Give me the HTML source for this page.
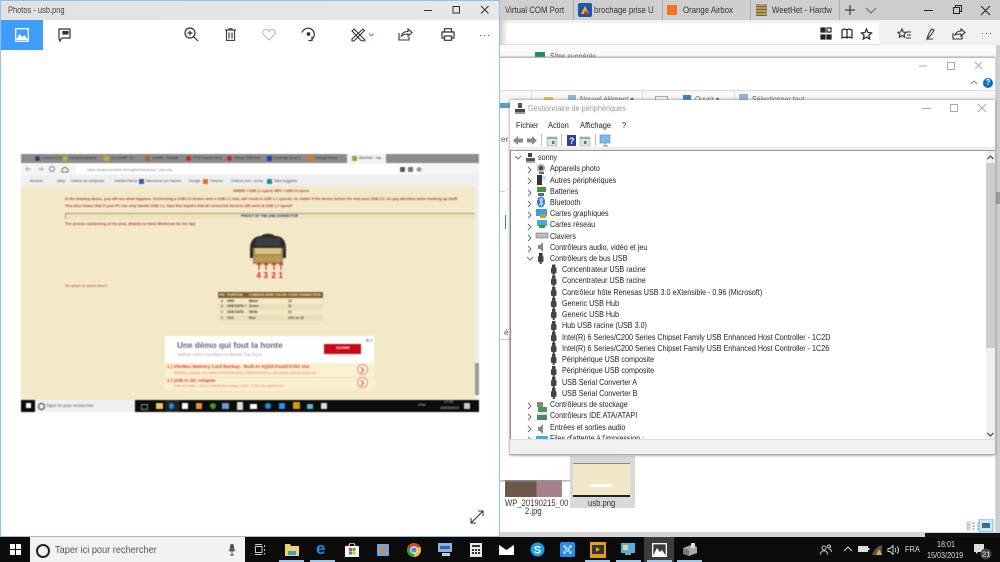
<!DOCTYPE html>
<html lang="fr"><head><meta charset="utf-8"><title>Photos - usb.png</title>
<style>
html,body{margin:0;padding:0;background:#fff}
body{width:1000px;height:562px;overflow:hidden;position:relative;font-family:"Liberation Sans",sans-serif}
#root{position:absolute;left:0;top:0;width:1000px;height:562px;overflow:hidden;filter:blur(.35px)}
.b,.t,svg{position:absolute}
.t{white-space:nowrap;line-height:1}
.s{transform:scaleX(.87);transform-origin:0 0}
.row{position:absolute;white-space:nowrap;font-size:8.6px;line-height:11px;color:#222;transform:scaleX(.835);transform-origin:0 0}
.tab{position:absolute;top:0;height:20px;background:#cfcfcf;border-right:1px solid #aaa}
#thumb .t{color:#b33a33}
#thumb .g{color:#666;font-size:3.500px;font-weight:normal}
#thumb .c{color:#333;font-size:3.300px;font-weight:bold}
</style></head><body><div id="root">

<!-- right side background -->
<div class="b" style="left:500px;top:0;width:500px;height:20px;background:#cdcdcd"></div>
<div class="b" style="left:500px;top:20px;width:500px;height:25px;background:#f0f0f0"></div>
<div class="b" style="left:500px;top:23px;width:379px;height:21px;background:#fff;border-bottom:1px solid #ddd"></div>
<div class="b" style="left:500px;top:20px;width:8px;height:520px;background:linear-gradient(90deg,#cfcfcf,rgba(255,255,255,0))"></div>
<div class="b" style="left:500px;top:45px;width:500px;height:12px;background:#fafafa"></div>
<div class="b" style="left:535px;top:52px;width:10px;height:6px;background:#1f8a70"></div>
<div class="t s" style="left:550px;top:53px;font-size:8px;color:#555">Sites suggérés</div>
<div class="b" style="left:996px;top:45px;width:4px;height:490px;background:#cfcfcf"></div>
<div class="b" style="left:996px;top:192px;width:4px;height:12px;background:#9c9c9c"></div>

<!-- browser tabs -->
<div class="tab" style="left:500px;width:73px"></div>
<div class="tab" style="left:574px;width:88px"></div>
<div class="tab" style="left:663px;width:87px"></div>
<div class="tab" style="left:751px;width:88px"></div>
<div class="t s" style="left:505px;top:6px;font-size:9px;color:#333">Virtual COM Port</div>
<svg style="left:578px;top:3px" width="14" height="14"><rect width="14" height="14" rx="2" fill="#2356a8"/><path d="M3 11 7 3l4 8z" fill="#e8c020"/><path d="M7 7l4 4H6z" fill="#d02828"/></svg>
<div class="t s" style="left:594px;top:6px;font-size:9px;color:#333;width:73px;overflow:hidden">brochage prise U</div>
<div class="b" style="left:667px;top:5px;width:10px;height:10px;background:#f47321"></div>
<div class="t s" style="left:683px;top:6px;font-size:9px;color:#333">Orange Airbox</div>
<div class="b" style="left:756px;top:4px;width:11px;height:12px;background:repeating-linear-gradient(180deg,#b39a5a 0 2px,#7c6a3c 2px 3px)"></div>
<div class="t s" style="left:772px;top:6px;font-size:9px;color:#333;width:72px;overflow:hidden">WeetHet - Hardw</div>
<svg style="left:843px;top:3px" width="36" height="14" fill="none" stroke="#222"><path d="M7 2v10M2 7h10"/><path d="M23 5l5 5 5-5" stroke="#666"/></svg>
<svg style="left:920px;top:4px" width="75" height="13" fill="none" stroke="#222"><path d="M4 6.500h9"/><rect x="33.500" y="3.500" width="6" height="6"/><path d="M35.500 3.500v-2h6v6h-2"/><path d="M61 2l9 9M70 2l-9 9"/></svg>
<!-- address bar icons -->
<svg style="left:820px;top:27px" width="54" height="14" fill="none" stroke="#222" stroke-width="1.200"><rect x="1" y="1" width="4" height="4" fill="#222"/><rect x="7" y="1" width="4" height="4"/><rect x="1" y="8" width="4" height="4" fill="#222"/><rect x="7" y="8" width="4" height="4" fill="#222"/><path d="M22 3c2-1 4-1 5 0 1-1 3-1 5 0v8c-2-1-4-1-5 0-1-1-3-1-5 0zM27 3v8"/><path d="M46.500 2l1.500 3.500 3.500.4-2.600 2.400.8 3.700-3.200-1.900-3.200 1.900.8-3.700-2.600-2.400 3.500-.4z"/></svg>
<svg style="left:897px;top:27px" width="96" height="14" fill="none" stroke="#333" stroke-width="1.100"><path d="M5 2l1.300 3 3 .3-2.200 2 .6 3-2.700-1.600-2.700 1.600.6-3-2.200-2 3-.3zM9 5h5M10 8h4M9 11h5"/><path d="M30 12c1-4 3-8 5-10l2 1c-1 3-3 5-5 7zM30 12h6"/><path d="M56 6v6h9V8M58 8c1-3 3-4 6-4V2l4 3.500-4 3.500V7c-2 0-4 0-6 1z"/></svg>
<div class="t" style="left:981px;top:29px;font-size:9px;color:#333;letter-spacing:1px">···</div>

<!-- explorer behind -->
<div class="b" style="left:500px;top:57px;width:495px;height:475px;background:#fff;box-shadow:0 0 2px #888;border-top:1px solid #bbb"></div>
<svg style="left:918px;top:60px" width="70" height="12" fill="none" stroke="#aaa"><path d="M1 6h8"/><rect x="29.500" y="2.500" width="7" height="7"/><path d="M57 2l7 7M64 2l-7 7"/></svg>
<svg style="left:970px;top:79px" width="8" height="6" fill="none" stroke="#888"><path d="M1 5l3-3 3 3"/></svg>
<div class="b" style="left:983px;top:78px;width:10px;height:10px;border-radius:50%;background:#0a6fd0;color:#fff;font:bold 8px/10px 'Liberation Sans',sans-serif;text-align:center">?</div>
<div class="b" style="left:500px;top:90px;width:495px;height:1px;background:#ddd"></div>
<div class="b" style="left:500px;top:91px;width:495px;height:14px;background:#f7f7f7"></div>
<div class="b" style="left:531px;top:91px;width:1px;height:10px;background:#ddd"></div>
<div class="b" style="left:642px;top:91px;width:1px;height:10px;background:#ddd"></div>
<div class="b" style="left:734px;top:91px;width:1px;height:10px;background:#ddd"></div>
<div class="b" style="left:544px;top:97px;width:9px;height:3px;background:#e8c45a"></div>
<div class="b" style="left:568px;top:95px;width:8px;height:5px;background:#8fb4dc"></div>
<div class="t s" style="left:580px;top:96px;font-size:8px;color:#666">Nouvel élément ▾</div>
<div class="b" style="left:655px;top:96px;width:11px;height:4px;border:1px solid #aaa"></div>
<div class="b" style="left:683px;top:95px;width:8px;height:5px;background:#3a7fd0"></div>
<div class="t s" style="left:695px;top:96px;font-size:8px;color:#666">Ouvrir ▾</div>
<div class="b" style="left:739px;top:94px;width:9px;height:6px;background:#8fb4dc"></div>
<div class="t s" style="left:752px;top:96px;font-size:8px;color:#666">Sélectionner tout</div>
<div class="b" style="left:500px;top:103px;width:10px;height:5px;background:#5b9bd5"></div>
<div class="t" style="left:501px;top:136px;font-size:8px;color:#555">er</div>
<div class="b" style="left:500px;top:191px;width:5px;height:1px;background:#ccc"></div>
<div class="b" style="left:505px;top:215px;width:1px;height:14px;background:#2a7fd0"></div>
<div class="b" style="left:500px;top:339px;width:10px;height:1px;background:#ccc"></div>
<div class="t" style="left:504px;top:329px;font-size:8px;color:#555">é</div>

<!-- file thumbnails -->
<div class="b" style="left:505px;top:480px;width:57px;height:17px;background:linear-gradient(90deg,#6b5a4a 0 55%,#a8808a 55%)"></div>
<div class="b" style="left:500px;top:456px;width:120px;height:24px;background:#fff;box-shadow:0 1px 2px #999"></div>
<div class="b" style="left:610px;top:456px;width:10px;height:24px;background:#efefef"></div>
<svg style="left:611px;top:472px" width="8" height="6" fill="none" stroke="#555"><path d="M1 1l3 3 3-3"/></svg>
<div class="t s" style="left:505px;top:499px;font-size:8.800px;color:#333">WP_20190215_00</div>
<div class="t s" style="left:525px;top:507px;font-size:8.800px;color:#333">2.jpg</div>
<div class="b" style="left:570px;top:456px;width:65px;height:52px;background:#d9d9d9"></div>
<div class="b" style="left:573px;top:463px;width:57px;height:31px;background:#f2e8c8;border-top:1px solid #888;border-bottom:2px solid #222"></div>
<div class="b" style="left:590px;top:484px;width:22px;height:3px;background:#fff"></div>
<div class="t s" style="left:588px;top:499px;font-size:8.800px;color:#333">usb.png</div>
<!-- explorer bottom -->
<svg style="left:965px;top:519px" width="30" height="14" fill="none"><path d="M2 3h3v2H2zM2 6h3v2H2zM2 9h3v2H2z" stroke="#d0a0a0" stroke-width=".7"/><path d="M7 4h3M7 7h3M7 10h3M12 4h3M12 7h3M12 10h3" stroke="#999"/><rect x="14" y="0" width="14" height="13" fill="#cfe6f5" stroke="#7ab8e0"/><rect x="17" y="4" width="8" height="5" fill="#3b6d8f"/></svg>
<div class="b" style="left:500px;top:532px;width:500px;height:5px;background:#d4d4d4"></div>
<div class="b" style="left:925px;top:533px;width:75px;height:4px;background:#111"></div>

<!-- device manager -->
<div class="b" style="left:510px;top:100px;width:485px;height:355px;background:#f0f0f0;box-shadow:0 0 3px #777"></div>
<div class="b" style="left:510px;top:100px;width:485px;height:33px;background:#fff"></div>
<svg style="left:514px;top:102px" width="12" height="13"><rect x="4" y="1" width="4" height="5" fill="#555"/><rect x="1" y="7" width="10" height="3" fill="#444"/><rect x="1" y="10" width="10" height="2" fill="#999"/></svg>
<div class="t s" style="left:528px;top:104px;font-size:8.600px;color:#999;transform:scaleX(.85)">Gestionnaire de périphériques</div>
<svg style="left:920px;top:103px" width="70" height="12" fill="none" stroke="#aaa"><path d="M2 5.500h9"/><rect x="30.500" y="1.500" width="7" height="7"/><path d="M58 1l8 8M66 1l-8 8"/></svg>
<div class="t s" style="left:516px;top:121px;font-size:8.600px;color:#222">Fichier</div>
<div class="t s" style="left:548px;top:121px;font-size:8.600px;color:#222">Action</div>
<div class="t s" style="left:580px;top:121px;font-size:8.600px;color:#222">Affichage</div>
<div class="t s" style="left:622px;top:121px;font-size:8.600px;color:#222">?</div>
<div class="b" style="left:510px;top:133px;width:485px;height:14px;background:#fff"></div>
<svg style="left:512px;top:134px" width="104" height="13"><path d="M1 6.500 6 2v2.500h5v4H6V11z" fill="#8a8a8a"/><path d="M25 6.500 20 2v2.500h-5v4h5V11z" fill="#8a8a8a"/><rect x="29" y="0" width="1" height="12" fill="#bbb"/><rect x="35" y="3" width="10" height="9" fill="#dde3e8" stroke="#aaa" stroke-width=".6"/><rect x="35" y="3" width="10" height="2" fill="#9aa"/><rect x="40" y="7" width="2.500" height="3" fill="#3a9a3a"/><rect x="49" y="0" width="1" height="12" fill="#bbb"/><rect x="55" y="1" width="9" height="11" fill="#2d3f9e"/><text x="57" y="10" font-size="9" font-weight="bold" fill="#fff" font-family="Liberation Sans">?</text><rect x="68" y="3" width="10" height="9" fill="#dde3e8" stroke="#aaa" stroke-width=".6"/><rect x="68" y="3" width="10" height="2" fill="#9aa"/><rect x="72" y="7" width="2.500" height="3" fill="#3a9a3a"/><rect x="83" y="0" width="1" height="12" fill="#bbb"/><rect x="88" y="1" width="10" height="8" fill="#7fb7e8" stroke="#4a86c0" stroke-width=".6"/><path d="M91 12h5M93 9v3" stroke="#888"/></svg>
<div class="b" style="left:510px;top:147px;width:485px;height:3px;background:#eee"></div>
<div class="b" style="left:510px;top:150px;width:485px;height:1px;background:#999"></div>
<div class="b" style="left:511px;top:151px;width:475px;height:288px;background:#fff;overflow:hidden" id="tree"></div>
<div class="b" style="left:510px;top:151px;width:1px;height:289px;background:#888"></div>
<div class="b" style="left:986px;top:151px;width:9px;height:289px;background:#f0f0f0"></div>
<div class="b" style="left:986px;top:163px;width:9px;height:185px;background:#cdcdcd"></div>
<svg style="left:986px;top:154px" width="9" height="6" fill="none" stroke="#555" stroke-width="1.300"><path d="M1.500 5l3-3 3 3"/></svg>
<svg style="left:986px;top:432px" width="9" height="6" fill="none" stroke="#555" stroke-width="1.300"><path d="M1.500 1l3 3 3-3"/></svg>
<div class="b" style="left:510px;top:439px;width:485px;height:1px;background:#ddd"></div>

<!-- tree -->
<div style="position:absolute;left:0;top:0;width:985px;height:439px;overflow:hidden">
<svg style="left:514px;top:154px" width="50" height="290" fill="none" stroke="#666" stroke-width=".9">
<path d="M1 2l3 3 3-3"/>
<path d="M14 13l3 3-3 3M14 24l3 3-3 3M14 36l3 3-3 3M14 47l3 3-3 3M14 58l3 3-3 3M14 70l3 3-3 3M14 81l3 3-3 3M14 92l3 3-3 3"/>
<path d="M13 103l3 3 3-3"/>
<path d="M14 249l3 3-3 3M14 260l3 3-3 3M14 272l3 3-3 3M14 283l3 3-3 3"/>
</svg>
<svg style="left:526px;top:152px" width="40" height="290">
<rect x="2" y="1" width="4" height="4" fill="#444"/><rect x="0" y="6" width="9" height="3" fill="#555"/><rect x="0" y="9" width="9" height="2" fill="#aaa"/>
<circle cx="15" cy="16" r="4" fill="#aaa"/><circle cx="15" cy="16" r="2" fill="#444"/><rect x="13" y="20" width="5" height="2" fill="#666"/>
<rect x="11" y="23" width="5" height="10" fill="#333"/><rect x="16" y="24" width="4" height="4" fill="#cde"/>
<rect x="11" y="35" width="9" height="5" fill="#3a9a3a"/><rect x="12" y="41" width="6" height="3" fill="#666"/>
<ellipse cx="15" cy="50" rx="4" ry="5.500" fill="#1a78e0"/><path d="M13 47l4 5-2 2v-8l2 2-4 5" stroke="#fff" stroke-width=".7" fill="none"/>
<rect x="10" y="57" width="11" height="7" fill="#39a0e0"/><rect x="14" y="62" width="6" height="4" fill="#c8a020"/>
<rect x="11" y="68" width="10" height="6" fill="#4aa8e0"/><rect x="13" y="73" width="6" height="3" fill="#3a9a3a"/>
<rect x="10" y="81" width="12" height="5" fill="#b8bcc0" stroke="#777" stroke-width=".6"/>
<path d="M12 93h2l3-3v10l-3-3h-2z" fill="#888"/>
<rect x="13" y="101" width="3.500" height="3" fill="#333"/><rect x="12" y="104" width="5.500" height="6" rx="1" fill="#444"/><rect x="13.700" y="110" width="2" height="2" fill="#444"/>
<g fill="#444" transform="translate(1 0)"><rect x="25" y="112.500" width="3.500" height="3"/><rect x="24" y="115.500" width="5.500" height="6" rx="1"/><rect x="25.700" y="121.500" width="2" height="2"/>
<rect x="25" y="123.700" width="3.500" height="3"/><rect x="24" y="126.700" width="5.500" height="6" rx="1"/><rect x="25.700" y="132.700" width="2" height="2"/>
<rect x="25" y="135" width="3.500" height="3"/><rect x="24" y="138" width="5.500" height="6" rx="1"/><rect x="25.700" y="144" width="2" height="2"/>
<rect x="25" y="146" width="3.500" height="3"/><rect x="24" y="149" width="5.500" height="6" rx="1"/><rect x="25.700" y="155" width="2" height="2"/>
<rect x="25" y="157" width="3.500" height="3"/><rect x="24" y="160" width="5.500" height="6" rx="1"/><rect x="25.700" y="166" width="2" height="2"/>
<rect x="25" y="169" width="3.500" height="3"/><rect x="24" y="172" width="5.500" height="6" rx="1"/><rect x="25.700" y="178" width="2" height="2"/>
<rect x="25" y="180" width="3.500" height="3"/><rect x="24" y="183" width="5.500" height="6" rx="1"/><rect x="25.700" y="189" width="2" height="2"/>
<rect x="25" y="191" width="3.500" height="3"/><rect x="24" y="194" width="5.500" height="6" rx="1"/><rect x="25.700" y="200" width="2" height="2"/>
<rect x="25" y="202" width="3.500" height="3"/><rect x="24" y="205" width="5.500" height="6" rx="1"/><rect x="25.700" y="211" width="2" height="2"/>
<rect x="25" y="214" width="3.500" height="3"/><rect x="24" y="217" width="5.500" height="6" rx="1"/><rect x="25.700" y="223" width="2" height="2"/>
<rect x="25" y="225" width="3.500" height="3"/><rect x="24" y="228" width="5.500" height="6" rx="1"/><rect x="25.700" y="234" width="2" height="2"/>
<rect x="25" y="236" width="3.500" height="3"/><rect x="24" y="239" width="5.500" height="6" rx="1"/><rect x="25.700" y="245" width="2" height="2"/></g>
<rect x="11" y="250" width="6" height="5" fill="#888"/><rect x="12" y="255" width="9" height="5" fill="#4a9a4a"/>
<rect x="11" y="261" width="10" height="7" fill="#4a8a5a"/><rect x="11" y="261" width="10" height="2" fill="#ddd"/>
<path d="M12 275h2l3-3v10l-3-3h-2z" fill="#888"/>
<rect x="10" y="284" width="12" height="6" fill="#4aa8e0"/>
</svg>
<div class="row" style="left:538px;top:152px">sonny</div>
<div class="row" style="left:550px;top:163px">Appareils photo</div>
<div class="row" style="left:550px;top:174.500px">Autres périphériques</div>
<div class="row" style="left:550px;top:185.500px">Batteries</div>
<div class="row" style="left:550px;top:196.700px">Bluetooth</div>
<div class="row" style="left:550px;top:208px">Cartes graphiques</div>
<div class="row" style="left:550px;top:219.200px">Cartes réseau</div>
<div class="row" style="left:550px;top:230.500px">Claviers</div>
<div class="row" style="left:550px;top:241.700px">Contrôleurs audio, vidéo et jeu</div>
<div class="row" style="left:550px;top:253px">Contrôleurs de bus USB</div>
<div class="row" style="left:562px;top:264px">Concentrateur USB racine</div>
<div class="row" style="left:562px;top:275.300px">Concentrateur USB racine</div>
<div class="row" style="left:562px;top:286.500px">Contrôleur hôte Renesas USB 3.0 eXtensible - 0.96 (Microsoft)</div>
<div class="row" style="left:562px;top:297.800px">Generic USB Hub</div>
<div class="row" style="left:562px;top:309px">Generic USB Hub</div>
<div class="row" style="left:562px;top:320.300px">Hub USB racine (USB 3.0)</div>
<div class="row" style="left:562px;top:331.500px">Intel(R) 6 Series/C200 Series Chipset Family USB Enhanced Host Controller - 1C2D</div>
<div class="row" style="left:562px;top:342.800px">Intel(R) 6 Series/C200 Series Chipset Family USB Enhanced Host Controller - 1C26</div>
<div class="row" style="left:562px;top:354px">Périphérique USB composite</div>
<div class="row" style="left:562px;top:365.300px">Périphérique USB composite</div>
<div class="row" style="left:562px;top:376.500px">USB Serial Converter A</div>
<div class="row" style="left:562px;top:387.800px">USB Serial Converter B</div>
<div class="row" style="left:550px;top:399px">Contrôleurs de stockage</div>
<div class="row" style="left:550px;top:410.300px">Contrôleurs IDE ATA/ATAPI</div>
<div class="row" style="left:550px;top:421.500px">Entrées et sorties audio</div>
<div class="row" style="left:550px;top:432.800px">Files d'attente à l'impression :</div>
</div>
<div class="b" style="left:510px;top:439px;width:485px;height:16px;background:#f0f0f0;border-top:1px solid #ddd;box-sizing:border-box;border-bottom:1px solid #aaa"></div>

<!-- photos window -->
<div class="b" style="left:0;top:0;background:#fff;border:1px solid #8fc0ee;box-sizing:content-box;width:498px;height:535px"></div>
<div class="b" style="left:1px;top:1px;width:498px;height:19px;background:linear-gradient(90deg,#e2e2e2,#e9e6e6)"></div>
<div class="t s" style="left:8px;top:6px;font-size:8.800px;color:#444;transform:scaleX(.85)">Photos - usb.png</div>
<svg style="left:420px;top:4px" width="72" height="12" fill="none" stroke="#333"><path d="M4 6.500h8"/><rect x="33" y="2.500" width="6.500" height="6.500"/><path d="M61 2l7.500 7.500M68.500 2 61 9.500"/></svg>
<div class="b" style="left:1px;top:20px;width:42px;height:30px;background:#3f9dfd"></div>
<svg style="left:15px;top:28px" width="14" height="14"><rect x=".7" y=".7" width="12.600" height="12.600" fill="none" stroke="#fff" stroke-width="1.300"/><path d="M1 12l3.500-6 3 3 2-2 3.500 5z" fill="#fff"/></svg>
<svg style="left:57px;top:28px" width="15" height="15" fill="none" stroke="#333" stroke-width="1.200"><path d="M2 1h11v9H5l-2 2 -1-1z"/><rect x="6" y="3.500" width="5" height="2.500" fill="#333"/><path d="M2 12h2M3 11v3"/></svg>
<svg style="left:184px;top:27px" width="15" height="15" fill="none" stroke="#333" stroke-width="1.200"><circle cx="6" cy="6" r="5"/><path d="M3.500 6h5M6 3.500v5M9.700 9.700 14 14"/></svg>
<svg style="left:225px;top:28px" width="11" height="13" fill="none" stroke="#444" stroke-width="1.200"><path d="M0 2h11M4 2V.7h3V2M1.500 2v10.500h8V2M4 4.500v6M7 4.500v6"/></svg>
<svg style="left:262px;top:28px" width="14" height="13" fill="none" stroke="#bbb" stroke-width="1.100"><path d="M7 12 1.500 6.500C0 5 .5 2 3 1.500c2-.3 3.300.8 4 2 .7-1.200 2-2.300 4-2 2.500.5 3 3.500 1.500 5z"/></svg>
<svg style="left:301px;top:27px" width="15" height="15" fill="none" stroke="#333" stroke-width="1.200"><path d="M1 5.500C2.500 2 6 .5 9 1.500c3.500 1.200 5.200 5 3.800 8.300-.5 1.200-1.300 2-2.300 2.700"/><path d="M11 9.500v4h-3.500"/><circle cx="7.500" cy="7" r="1.300" fill="#333"/></svg>
<svg style="left:351px;top:28px" width="26" height="14" fill="none" stroke="#333" stroke-width="1.100"><path d="M1 3l2-2 11 11-1 1-3-.5zM12 1l1.500 1.500L3 13l-2 0 0-2z"/><path d="M18 5.500l2.500 2.500L23 5.500" stroke="#5aa7ee" stroke-width="1.300"/></svg>
<svg style="left:398px;top:28px" width="15" height="13" fill="none" stroke="#333" stroke-width="1.100"><path d="M1 5v7h10V9M3.500 8c.5-3 3-4.500 6.500-4.500V1l4 3.500L10 8V6C7 6 5 6.500 3.500 8z"/></svg>
<svg style="left:441px;top:28px" width="14" height="13" fill="none" stroke="#333" stroke-width="1.200"><path d="M3.500 4V.7h7V4M3.500 10H1V4h12v6h-2.500M3.500 8h7v4.300h-7z"/></svg>
<div class="t" style="left:479px;top:31px;font-size:9px;color:#333;letter-spacing:1px">···</div>
<svg style="left:470px;top:510px" width="14" height="14" fill="none" stroke="#333" stroke-width="1.100"><path d="M1 13 13 1M8 1h5v5M1 8v5h5"/></svg>

<!-- screenshot thumbnail -->
<div id="thumb" class="b" style="left:21px;top:154px;width:458px;height:258px;background:#f3e9c8;overflow:hidden;filter:blur(.4px)">
<div class="b" style="left:0;top:0;width:458px;height:9px;background:#8b8b8b"></div>
<div class="b" style="left:0;top:9px;width:458px;height:12px;background:#f4f4f4"></div>
<div class="b" style="left:55px;top:10px;width:345px;height:10px;background:#fff"></div>
<div class="b" style="left:0;top:21px;width:458px;height:11px;background:#efefef"></div>
<div class="b" style="left:326px;top:0;width:39px;height:9px;background:#f2f2f2"></div>
<div class="b" style="left:14px;top:2px;width:5px;height:5px;background:#246;border-radius:50%"></div>
<div class="b" style="left:41px;top:2px;width:5px;height:5px;background:#ca3"></div>
<div class="b" style="left:83px;top:2px;width:5px;height:5px;background:#ca3"></div>
<div class="b" style="left:124px;top:2px;width:5px;height:5px;background:#a63"></div>
<div class="b" style="left:165px;top:2px;width:5px;height:5px;background:#c22;border-radius:50%"></div>
<div class="b" style="left:206px;top:2px;width:5px;height:5px;background:#c22;border-radius:50%"></div>
<div class="b" style="left:246px;top:2px;width:5px;height:5px;background:#24a"></div>
<div class="b" style="left:287px;top:2px;width:5px;height:5px;background:#e70"></div>
<div class="b" style="left:331px;top:2px;width:5px;height:5px;background:#a93"></div>
<div class="t g" style="left:21px;top:2.800px;color:#333">Camera CCD</div>
<div class="t g" style="left:48px;top:2.800px;color:#333">Astrophotography</div>
<div class="t g" style="left:90px;top:2.800px;color:#333">(1) Camlift - In</div>
<div class="t g" style="left:131px;top:2.800px;color:#333">Camlift - Installat</div>
<div class="t g" style="left:172px;top:2.800px;color:#333">PTOI Search Resu</div>
<div class="t g" style="left:213px;top:2.800px;color:#333">Virtual COM Port</div>
<div class="t g" style="left:253px;top:2.800px;color:#333">brochage prise U</div>
<div class="t g" style="left:294px;top:2.800px;color:#333">Orange Airbox</div>
<div class="t g" style="left:338px;top:2.800px;color:#333">WeetHet - Har</div>
<svg style="left:3px;top:11px" width="45" height="8" fill="none" stroke="#aaa"><path d="M2 4h5M4 2 2 4l2 2M14 4h5M17 2l2 2-2 2"/><circle cx="28" cy="4" r="2.500" stroke="#777"/><path d="M38 7V4l3-2 3 2v3z" stroke="#777"/></svg>
<div class="t g" style="left:66px;top:14px;color:#888;font-size:3.900px">https://www.weethet.nl/english/hardware_usb.php</div>
<svg style="left:379px;top:12px" width="40" height="7" fill="#555"><rect x="0" y="1" width="5" height="5"/><rect x="8" y="1" width="5" height="5" fill="#777"/><circle cx="19" cy="3.500" r="2.500" fill="#999"/></svg>
<div class="t g" style="left:9px;top:26px;color:#444">Amazon</div>
<div class="t g" style="left:36px;top:26px;color:#444">eBay</div>
<div class="t g" style="left:50px;top:26px;color:#444">Galerie de composan</div>
<div class="t g" style="left:93px;top:26px;color:#444">Toshiba Places</div>
<div class="b" style="left:118px;top:25px;width:5px;height:5px;background:#3b5998"></div>
<div class="t g" style="left:125px;top:26px;color:#444">Bienvenue sur Facebo</div>
<div class="t g" style="left:168px;top:26px;color:#444">Google</div>
<div class="b" style="left:182px;top:25px;width:5px;height:5px;background:#e86a1a"></div>
<div class="t g" style="left:189px;top:26px;color:#444">Freebox</div>
<div class="t g" style="left:210px;top:26px;color:#444">Outlook.com - sonny</div>
<div class="b" style="left:246px;top:25px;width:5px;height:5px;background:#1f8a9a"></div>
<div class="t g" style="left:253px;top:26px;color:#444">Sites suggérés</div>
<div class="t" style="left:212px;top:36px;font-size:3.400px;font-weight:bold">GREEN = USB 1.1 speed, RED = USB 2.0 speed</div>
<div class="t" style="left:44px;top:43.500px;font-size:3.720px;font-weight:bold">In the drawing above, you will see what happens. Connecting a USB 2.0 device onto a USB 1.1 hub, will result in USB 1.1 speeds, no matter if the device before the hub uses USB 2.0. So pay attention when hooking up stuff!</div>
<div class="t" style="left:44px;top:51px;font-size:3.720px;font-weight:bold">This also means that if your PC can only handle USB 1.1, than this implies that all connected devices will work at USB 1.1 speed!</div>
<div class="b" style="left:44px;top:58.500px;width:410px;height:1px;background:#b09a70"></div>
<div class="b" style="left:44px;top:59.500px;width:410px;height:5px;background:#efe3bd;border-left:1px solid #a98"></div>
<div class="t" style="left:220px;top:60.500px;font-size:3.400px;font-weight:bold;color:#1a2a9a!important">PINOUT OF THE USB CONNECTOR</div>
<div class="t" style="left:44px;top:68.500px;font-size:3.750px;font-weight:bold">The precise numbering of the pins, (thanks to Hans Bleileman for the tip):</div>
<!-- usb plug -->
<svg style="left:229px;top:77px" width="40" height="50"><path d="M0 18C0 8 6 5 11 5c3-3 11-3 14 0 6 0 11 3 11 13v9H0z" fill="#2c2c2c"/><path d="M6 7h24v8H6z" fill="#3d3d3d"/><rect x="3" y="17" width="30" height="16" fill="#a88a4a"/><rect x="5" y="17" width="26" height="6" fill="#dcc484"/><rect x="5" y="25" width="26" height="6" fill="#b89a5a"/><path d="M9 39v-7M7 34l2-2 2 2M16 39v-7M14 34l2-2 2 2M24 39v-7M22 34l2-2 2 2M31 39v-7M29 34l2-2 2 2" stroke="#d22" fill="none"/><text x="6.500" y="47" font-size="8" font-weight="bold" fill="#d22" font-family="Liberation Sans">4</text><text x="13.500" y="47" font-size="8" font-weight="bold" fill="#d22" font-family="Liberation Sans">3</text><text x="21.500" y="47" font-size="8" font-weight="bold" fill="#d22" font-family="Liberation Sans">2</text><text x="28.500" y="47" font-size="8" font-weight="bold" fill="#d22" font-family="Liberation Sans">1</text></svg>
<div class="t" style="left:44px;top:130px;font-size:4px">So which is which then?</div>
<div class="b" style="left:197px;top:138px;width:105px;height:6px;background:#80602a"></div>
<div class="t c" style="left:198px;top:139.500px;color:#f5e8c0">PIN</div>
<div class="t c" style="left:206px;top:139.500px;color:#f5e8c0">PURPOSE</div>
<div class="t c" style="left:228px;top:139.500px;color:#f5e8c0">COMMON WIRE COLOR</div>
<div class="t c" style="left:267px;top:139.500px;color:#f5e8c0">CONS CONNECTION</div>
<div class="b" style="left:197px;top:150px;width:105px;height:5.500px;background:#ebdfba"></div>
<div class="b" style="left:197px;top:161px;width:105px;height:6px;background:#ebdfba"></div>
<div class="t c" style="left:200px;top:145.500px">4</div><div class="t c" style="left:206px;top:145.500px">GND</div><div class="t c" style="left:228px;top:145.500px">Black</div><div class="t c" style="left:267px;top:145.500px">13</div>
<div class="t c" style="left:200px;top:151px">3</div><div class="t c" style="left:206px;top:151px">USB DATA +</div><div class="t c" style="left:228px;top:151px">Green</div><div class="t c" style="left:267px;top:151px">11</div>
<div class="t c" style="left:200px;top:156.500px">2</div><div class="t c" style="left:206px;top:156.500px">USB DATA -</div><div class="t c" style="left:228px;top:156.500px">White</div><div class="t c" style="left:267px;top:156.500px">12</div>
<div class="t c" style="left:200px;top:162.500px">1</div><div class="t c" style="left:206px;top:162.500px">VCC</div><div class="t c" style="left:228px;top:162.500px">Red</div><div class="t c" style="left:267px;top:162.500px">VCC or 19</div>
<div class="b" style="left:144px;top:182px;width:209px;height:27px;background:#fff"></div>
<div class="t" style="left:156px;top:188px;font-size:8.200px;font-weight:bold;color:#5f6a75!important">Une démo qui fout la honte</div>
<div class="t" style="left:156px;top:198.500px;font-size:4.600px;color:#aaa!important">Vidéos 100% insolites en illimité Top Buzz</div>
<div class="b" style="left:303px;top:190px;width:37px;height:10px;background:#c90b18"></div>
<div class="t" style="left:315px;top:193px;font-size:3.500px;font-weight:bold;color:#fff!important">OUVRIR</div>
<div class="b" style="left:345px;top:185px;width:3px;height:3px;background:#7cc4ee"></div>
<div class="b" style="left:349px;top:185px;width:3px;height:3px;background:#bcdcee"></div>
<div class="b" style="left:144px;top:209px;width:210px;height:14px;background:#fbf0d2"></div>
<div class="b" style="left:144px;top:223px;width:210px;height:1px;background:#f3e3c0"></div>
<div class="b" style="left:144px;top:224px;width:210px;height:12px;background:#fbf0d2"></div>
<div class="t" style="left:146px;top:211px;font-size:4.600px;font-weight:bold;color:#d63c2c!important">1 | XferMax Memory Card Backup - Built-in XQD/CFast/CF/SD slot</div>
<div class="t" style="left:153px;top:217.500px;font-size:3.200px;color:#e77!important">500MB/s, compact, removable HDD/SSD/Rubber, XQD/CFast/SD no card reader need xq-cards.com</div>
<div class="t" style="left:146px;top:224.500px;font-size:4.600px;font-weight:bold;color:#d63c2c!important">2 | USB to I2C Adapter</div>
<div class="t" style="left:153px;top:230.500px;font-size:3.200px;color:#e77!important">Drive I2C traffic - 254 to 3.9Mb/its Bus voltage 1.50V - 5.25V. ISA system.com</div>
<div class="b" style="left:336px;top:210px;width:9px;height:9px;border:1px solid #e88;border-radius:50%;background:#fdf6e4"></div>
<div class="b" style="left:336px;top:223px;width:9px;height:9px;border:1px solid #e88;border-radius:50%;background:#fdf6e4"></div>
<svg style="left:339px;top:212px" width="5" height="21" fill="none" stroke="#d54" stroke-width="1.200"><path d="M1 1l2.500 3L1 7M1 14l2.500 3L1 20"/></svg>
<div class="b" style="left:454px;top:31px;width:4px;height:215px;background:#efefef"></div>
<div class="b" style="left:454px;top:209px;width:4px;height:32px;background:#9a9a9a"></div>
<div class="b" style="left:0;top:246px;width:458px;height:12px;background:#0c0c0c"></div>
<div class="b" style="left:14px;top:246px;width:100px;height:12px;background:#f0f0f0"></div>
<div class="b" style="left:17px;top:249px;width:5px;height:5px;border:1px solid #333;border-radius:50%"></div>
<div class="t" style="left:25px;top:250px;font-size:4.300px;color:#555!important">Taper ici pour rechercher</div>
<div class="b" style="left:5px;top:249px;width:5px;height:5px;background:#fff"></div>
<div class="b" style="left:120px;top:250px;width:5px;height:4px;border:1px solid #888"></div>
<div class="b" style="left:135px;top:249px;width:7px;height:6px;background:#e9c766"></div>
<div class="b" style="left:144px;top:246px;width:14px;height:12px;background:#222"></div>
<div class="b" style="left:148px;top:249px;width:5px;height:6px;background:#1a8fe0;border-radius:50%"></div>
<div class="b" style="left:161px;top:249px;width:6px;height:6px;background:#fff"></div>
<div class="b" style="left:175px;top:249px;width:6px;height:6px;background:#e8923a"></div>
<div class="b" style="left:189px;top:249px;width:6px;height:6px;background:#3a9a3a;border-radius:50%"></div>
<div class="b" style="left:201px;top:249px;width:7px;height:6px;background:#6a9ad8"></div>
<div class="b" style="left:216px;top:248px;width:6px;height:8px;background:#ddd"></div>
<div class="b" style="left:229px;top:250px;width:7px;height:5px;background:#fff"></div>
<div class="b" style="left:244px;top:249px;width:6px;height:6px;background:#1a8fe0;border-radius:50%"></div>
<div class="b" style="left:258px;top:249px;width:6px;height:6px;background:#2a8fe8"></div>
<div class="b" style="left:272px;top:248px;width:7px;height:7px;background:#d49a10"></div>
<div class="b" style="left:286px;top:250px;width:6px;height:5px;background:#5ab0e0"></div>
<div class="b" style="left:300px;top:249px;width:6px;height:6px;background:#ddd"></div>
<div class="t" style="left:423px;top:247px;font-size:3.800px;color:#ddd!important">17:02</div>
<div class="t" style="left:419px;top:252.500px;font-size:3.800px;color:#ddd!important">15/03/2019</div>
<div class="b" style="left:443px;top:249px;width:6px;height:6px;background:#ccc"></div>
<div class="t" style="left:397px;top:250px;font-size:3.800px;color:#ccc!important">FRA</div>
</div>

<!-- taskbar -->
<div class="b" style="left:0;top:537px;width:1000px;height:25px;background:#0b0b0b"></div>
<div class="b" style="left:30px;top:537px;width:215px;height:25px;background:#f2f2f2"></div>
<svg style="left:10px;top:544px" width="11" height="11" fill="#fff"><rect width="5" height="5"/><rect x="6" width="5" height="5"/><rect y="6" width="5" height="5"/><rect x="6" y="6" width="5" height="5"/></svg>
<div class="b" style="left:36px;top:544px;width:10px;height:10px;border:2px solid #222;border-radius:50%"></div>
<div class="t" style="left:55px;top:545.500px;font-size:10px;color:#555;transform:scaleX(.92);transform-origin:0 0">Taper ici pour rechercher</div>
<svg style="left:228px;top:544px" width="8" height="12"><rect x="2" y="0" width="4" height="7" rx="2" fill="#555"/><path d="M1 5c0 3 6 3 6 0M4 8v3M2 11h4" stroke="#555" fill="none"/></svg>
<svg style="left:254px;top:544px" width="12" height="11" fill="none" stroke="#ccc"><rect x="1.500" y="2.500" width="6.500" height="6"/><path d="M1 .5h7M1 10.500h7M10.500 1v2M10.500 5v2M10.500 9v1.500"/></svg>
<svg style="left:285px;top:543px" width="14" height="13"><path d="M0 1h5l1 2h8v10H0z" fill="#f3cf6a"/><rect x="3" y="8" width="8" height="4" fill="#3aa0dc"/></svg>
<div class="t" style="left:316px;top:540px;font-size:17px;font-weight:bold;color:#1a8fe8">e</div>
<svg style="left:345px;top:543px" width="14" height="14"><rect y="3" width="14" height="11" fill="#f4f4f4"/><path d="M4 3c0-4 6-4 6 0" stroke="#f4f4f4" fill="none"/><rect x="4" y="5" width="3" height="3" fill="#e04a2a"/><rect x="7.500" y="5" width="3" height="3" fill="#5aaa3a"/><rect x="4" y="8.500" width="3" height="3" fill="#2a8ae0"/><rect x="7.500" y="8.500" width="3" height="3" fill="#f0b020"/></svg>
<svg style="left:377px;top:544px" width="12" height="12"><rect width="12" height="12" rx="1" fill="#6fa8d8"/><path d="M4 2l6 4-6 4z" fill="#f08020"/></svg>
<svg style="left:407px;top:543px" width="14" height="14"><circle cx="7" cy="7" r="7" fill="#e04030"/><path d="M7 7 13 3.500A7 7 0 0 1 7 14z" fill="#f4c020"/><path d="M7 7 7 14A7 7 0 0 1 1 3.500z" fill="#3a9a3a"/><circle cx="7" cy="7" r="3.300" fill="#4a90e2" stroke="#fff"/></svg>
<svg style="left:438px;top:543px" width="14" height="14"><rect width="14" height="9" fill="#8ab4e0"/><rect x="2" y="3" width="10" height="3" fill="#3060b0"/><rect x="4" y="10" width="8" height="3" fill="#ccc"/></svg>
<svg style="left:470px;top:543px" width="12" height="14"><rect width="12" height="14" fill="#e8e8e8"/><rect x="2" y="2" width="8" height="2" fill="#333"/><g fill="#333"><rect x="2" y="6" width="2" height="2"/><rect x="5" y="6" width="2" height="2"/><rect x="8" y="6" width="2" height="2"/><rect x="2" y="9" width="2" height="2"/><rect x="5" y="9" width="2" height="2"/><rect x="8" y="9" width="2" height="2"/></g></svg>
<svg style="left:499px;top:545px" width="15" height="10"><rect width="15" height="10" fill="#fff"/><path d="M0 0l7.500 5L15 0" fill="#111"/></svg>
<svg style="left:530px;top:542px" width="15" height="15"><circle cx="7.500" cy="7.500" r="7" fill="#1c9bea"/><text x="3.800" y="11.500" font-size="11" font-weight="bold" fill="#fff" font-family="Liberation Sans">S</text></svg>
<svg style="left:560px;top:542px" width="15" height="15" fill="none"><rect width="15" height="15" rx="2" fill="#2a8ae8"/><path d="M4 6V4h2M9 4h2v2M11 9v2H9M6 11H4V9" stroke="#fff"/><rect x="6" y="6" width="3" height="3" stroke="#fff"/></svg>
<svg style="left:590px;top:542px" width="16" height="16"><rect width="16" height="16" fill="#e0a010"/><rect x="2" y="3" width="12" height="9" fill="#333"/><path d="M6 5l4 2.500L6 10z" fill="#e0a010"/></svg>
<svg style="left:621px;top:543px" width="14" height="13"><rect width="14" height="10" fill="#55aee0"/><rect x="2" y="2" width="5" height="5" fill="#e6d28a"/><rect x="4" y="10" width="6" height="2" fill="#999"/></svg>
<div class="b" style="left:644px;top:537px;width:30px;height:25px;background:#3c3c3c"></div>
<svg style="left:652px;top:543px" width="15" height="14"><rect x=".7" y=".7" width="13.600" height="12.600" fill="none" stroke="#fff" stroke-width="1.300"/><path d="M1 13l4-8 3 4 2-2 4 6z" fill="#fff"/></svg>
<svg style="left:683px;top:543px" width="14" height="13"><path d="M0 5l8-3 6 2v6l-8 3-6-2z" fill="#aaa"/><path d="M0 5l6 2v6l-6-2z" fill="#777"/><rect x="8" y="0" width="4" height="5" fill="#ddd"/></svg>
<svg style="left:820px;top:544px" width="12" height="11" fill="none" stroke="#ccc"><circle cx="4" cy="4" r="2"/><path d="M.5 10.500c0-5 7-5 7 0"/><circle cx="9" cy="2.500" r="1.500"/><path d="M9 5c2 0 2.500 2 2.500 3"/></svg>
<svg style="left:843px;top:546px" width="10" height="6" fill="none" stroke="#ddd"><path d="M1 5l4-4 4 4"/></svg>
<svg style="left:858px;top:546px" width="12" height="7"><rect width="10" height="6" fill="#ddd"/><rect x="10" y="2" width="1.500" height="2" fill="#ddd"/></svg>
<svg style="left:872px;top:545px" width="11" height="10"><path d="M0 10C2 4 6 1 10 0v10z" fill="#555"/><path d="M7 4l3 6H4z" fill="#e8b020"/></svg>
<svg style="left:887px;top:545px" width="13" height="10" fill="none" stroke="#ccc"><path d="M1 3.500h2l3-3v9l-3-3H1zM8 3c1 1 1 3 0 4M10 1.500c2 2 2 5 0 7"/></svg>
<div class="t s" style="left:905px;top:545px;font-size:8.500px;color:#ddd">FRA</div>
<div class="t s" style="left:937px;top:539.500px;font-size:8.300px;color:#ddd">18:01</div>
<div class="t s" style="left:927px;top:551px;font-size:8.300px;color:#ddd">15/03/2019</div>
<svg style="left:974px;top:544px" width="20" height="16"><path d="M0 0h10v8H4l-2 2V8H0z" fill="#ddd"/><circle cx="12" cy="10" r="5.500" fill="#444"/><text x="8" y="12.500" font-size="7.500" fill="#fff" font-family="Liberation Sans">21</text></svg>
<!-- running underlines -->
<div class="b" style="left:279px;top:560px;width:25px;height:2px;background:#9cc8ea"></div>
<div class="b" style="left:310px;top:560px;width:25px;height:2px;background:#9cc8ea"></div>
<div class="b" style="left:585px;top:560px;width:25px;height:2px;background:#9cc8ea"></div>
<div class="b" style="left:616px;top:560px;width:25px;height:2px;background:#9cc8ea"></div>
<div class="b" style="left:647px;top:560px;width:25px;height:2px;background:#9cc8ea"></div>
<div class="b" style="left:677px;top:560px;width:25px;height:2px;background:#9cc8ea"></div>

</div></body></html>
